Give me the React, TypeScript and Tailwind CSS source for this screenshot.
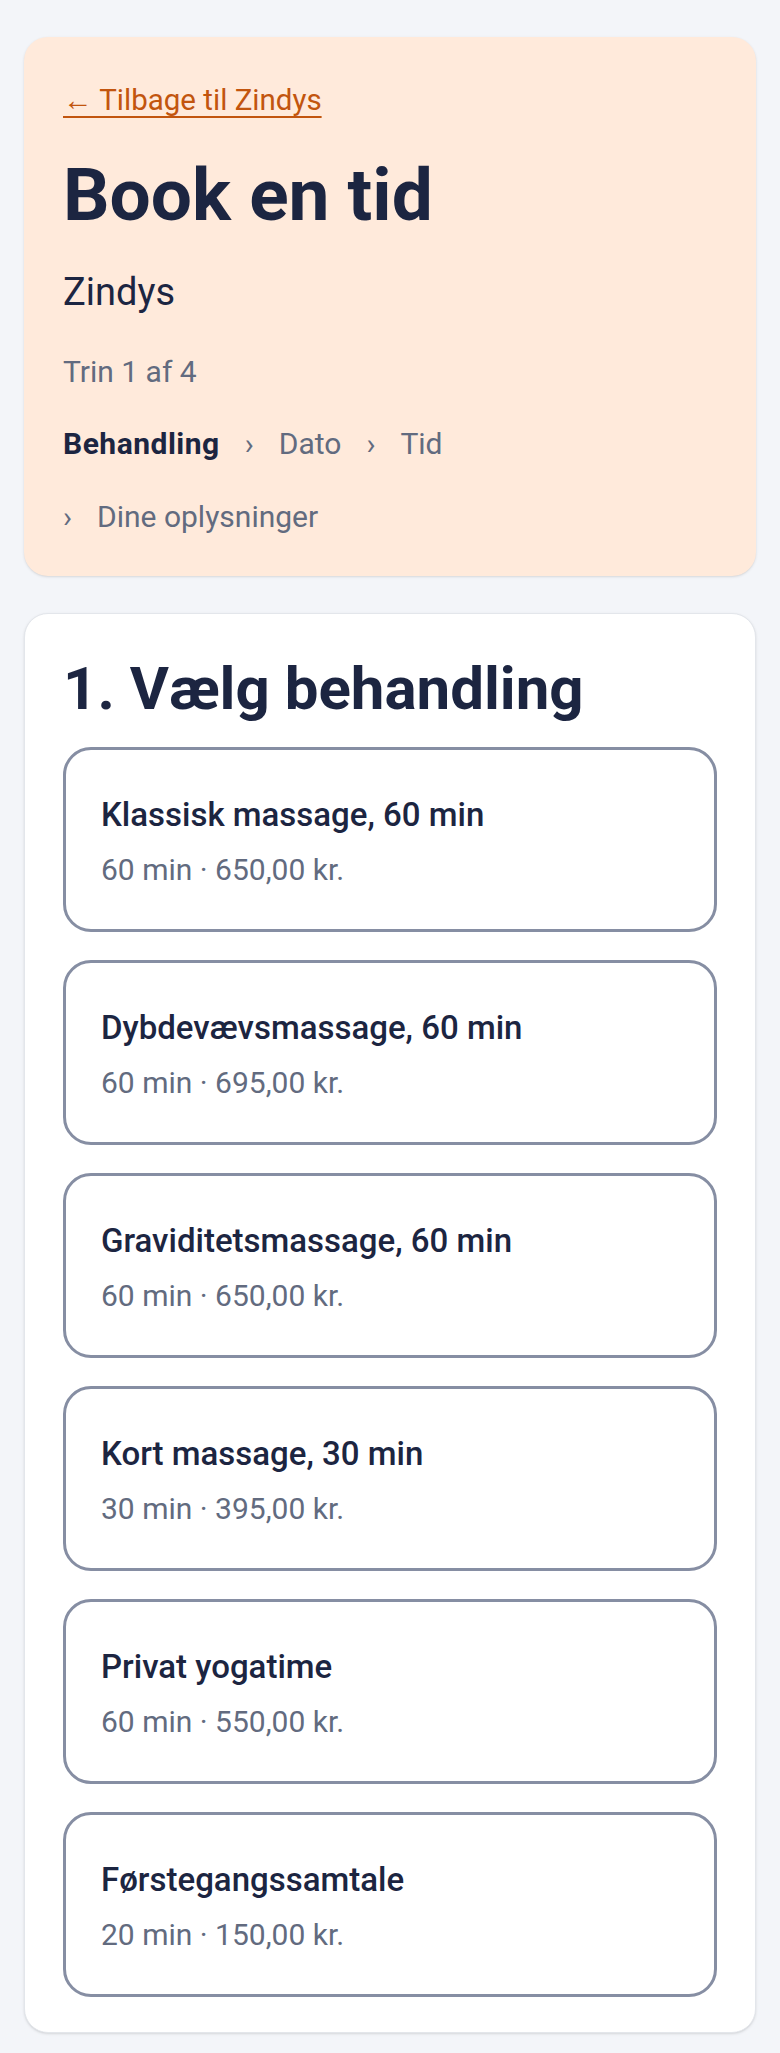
import React from 'react'

const treatments = [
  { name: 'Klassisk massage, 60 min', meta: '60 min · 650,00 kr.' },
  { name: 'Dybdevævsmassage, 60 min', meta: '60 min · 695,00 kr.' },
  { name: 'Graviditetsmassage, 60 min', meta: '60 min · 650,00 kr.' },
  { name: 'Kort massage, 30 min', meta: '30 min · 395,00 kr.' },
  { name: 'Privat yogatime', meta: '60 min · 550,00 kr.' },
  { name: 'Førstegangssamtale', meta: '20 min · 150,00 kr.' },
]

const steps = ['Dato', 'Tid', 'Dine oplysninger']

const App = () => {
  return (
    <div className="min-h-screen bg-[#f3f5f9] px-6 pt-[37px] pb-5 font-[Roboto,'Liberation_Sans',sans-serif]">
      {/* header */}
      <div className="flex flex-col rounded-[24px] bg-[#ffeadb] px-[39px] pt-[43px] pb-[39px] shadow-sm">
        <a
          href="#"
          className="self-start text-[29.5px] leading-[40px] text-[#c2550e] underline decoration-2 underline-offset-[6px]"
        >
          ← Tilbage til Zindys
        </a>
        <h1 className="mt-[35px] text-[73px] leading-[80px] font-bold text-[#1c2541]">Book en tid</h1>
        <p className="mt-[33px] text-[38px] leading-[48px] text-[#1c2541]">Zindys</p>
        <p className="mt-[36px] text-[30px] leading-[40px] text-[#626b7f]">Trin 1 af 4</p>
        <div className="mt-[32px] flex max-w-[640px] flex-wrap gap-x-[25px] gap-y-[33px] text-[30px] leading-[40px] text-[#626b7f]">
          <span className="font-bold tracking-[0.5px] text-[#1c2541]">Behandling</span>
          {steps.map((s) => (
            <span key={s} className="flex gap-x-[25px]">
              <span>›</span>
              <span>{s}</span>
            </span>
          ))}
        </div>
      </div>

      {/* treatments */}
      <div className="mt-[37px] rounded-[24px] border border-[#e3e6eb] bg-white px-[38px] pt-[40px] pb-[35px] shadow-sm">
        <h2 className="text-[60px] leading-[70px] font-bold text-[#1c2541]">1. Vælg behandling</h2>
        <div className="mt-[23px] flex flex-col gap-[28px]">
          {treatments.map((t) => (
            <button
              key={t.name}
              className="flex w-full flex-col rounded-[28px] border-[3px] border-[#868ea3] bg-white pt-[45px] pr-6 pb-[41px] pl-[35px] text-left"
            >
              <span className="text-[33px] leading-[40px] font-medium text-[#1c2541]">{t.name}</span>
              <span className="mt-[17px] text-[30px] leading-[36px] text-[#626b7f]">{t.meta}</span>
            </button>
          ))}
        </div>
      </div>
    </div>
  )
}

export default App
